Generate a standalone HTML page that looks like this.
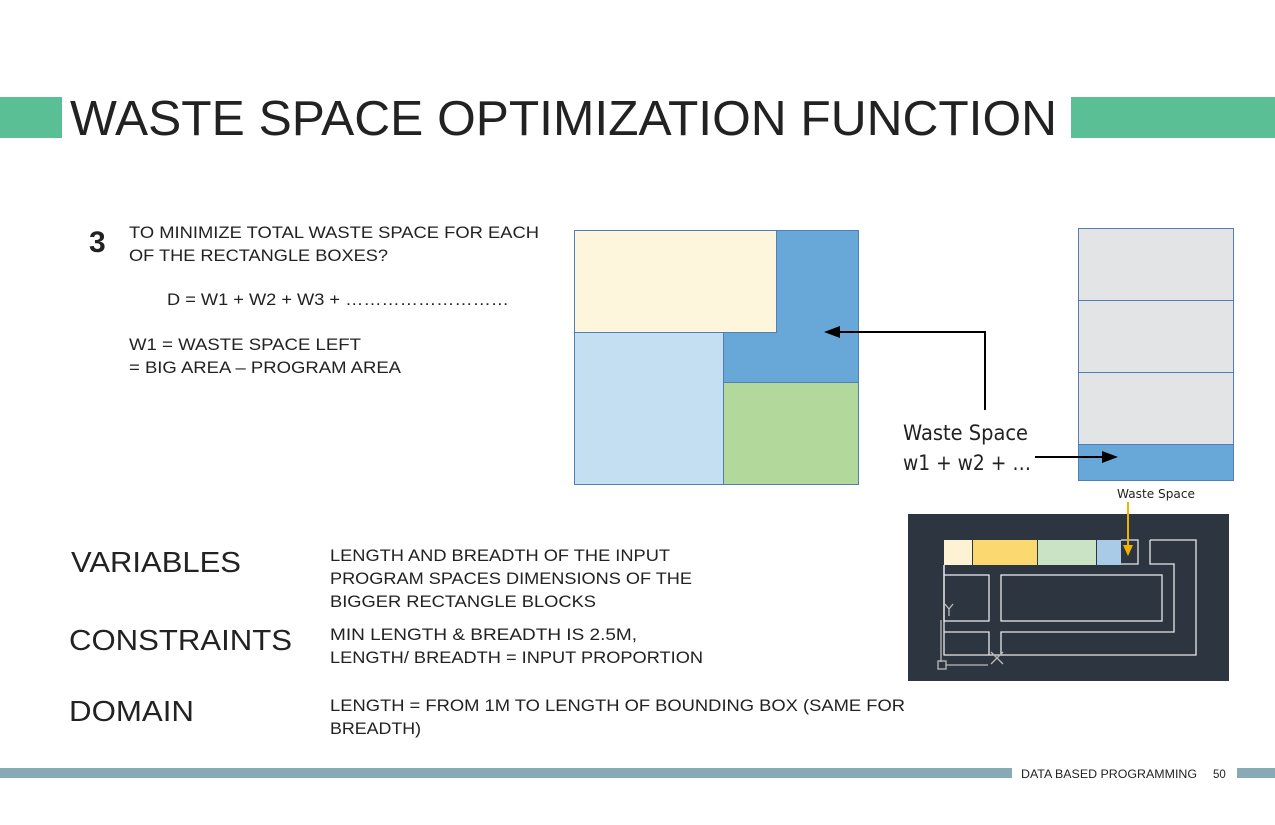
<!DOCTYPE html>
<html><head><meta charset="utf-8"><style>
html,body{margin:0;padding:0;background:#fff;}
svg{display:block;}
text{font-family:"Liberation Sans",sans-serif;fill:#222;}
.c{font-family:"DejaVu Sans","Liberation Sans",sans-serif;}
</style></head><body>
<svg width="1275" height="825" viewBox="0 0 1275 825" xmlns="http://www.w3.org/2000/svg">
<rect x="0" y="97" width="62" height="41" fill="#5abf94"/>
<rect x="1071" y="97" width="204" height="41" fill="#5abf94"/>
<text x="70" y="135" font-size="49" textLength="987" lengthAdjust="spacingAndGlyphs" style="font-weight:300">WASTE SPACE OPTIMIZATION FUNCTION</text>

<text x="89" y="252" font-size="30" font-weight="bold">3</text>
<g font-size="16.5">
<text x="129" y="238" textLength="410" lengthAdjust="spacingAndGlyphs">TO MINIMIZE TOTAL WASTE SPACE FOR EACH</text>
<text x="129" y="261" textLength="259" lengthAdjust="spacingAndGlyphs">OF THE RECTANGLE BOXES?</text>
<text x="167" y="305" textLength="342" lengthAdjust="spacingAndGlyphs">D = W1 + W2 + W3 + ………………………</text>
<text x="129" y="350" textLength="232" lengthAdjust="spacingAndGlyphs">W1 =  WASTE SPACE LEFT</text>
<text x="129" y="373" textLength="272" lengthAdjust="spacingAndGlyphs">= BIG AREA – PROGRAM AREA</text>

<text x="330" y="561" textLength="340" lengthAdjust="spacingAndGlyphs">LENGTH AND BREADTH OF THE INPUT</text>
<text x="330" y="584" textLength="362" lengthAdjust="spacingAndGlyphs">PROGRAM SPACES DIMENSIONS OF THE</text>
<text x="330" y="607" textLength="266" lengthAdjust="spacingAndGlyphs">BIGGER RECTANGLE BLOCKS</text>
<text x="330" y="640" textLength="307" lengthAdjust="spacingAndGlyphs">MIN LENGTH &amp; BREADTH IS 2.5M,</text>
<text x="330" y="663" textLength="373" lengthAdjust="spacingAndGlyphs">LENGTH/ BREADTH = INPUT PROPORTION</text>
<text x="330" y="711" textLength="575" lengthAdjust="spacingAndGlyphs">LENGTH = FROM 1M TO LENGTH OF BOUNDING BOX (SAME FOR</text>
<text x="330" y="734" textLength="91" lengthAdjust="spacingAndGlyphs">BREADTH)</text>
</g>
<g font-size="29">
<text x="71" y="572" textLength="170" lengthAdjust="spacingAndGlyphs">VARIABLES</text>
<text x="69" y="650" textLength="223" lengthAdjust="spacingAndGlyphs">CONSTRAINTS</text>
<text x="69" y="721" textLength="125" lengthAdjust="spacingAndGlyphs">DOMAIN</text>
</g>

<!-- left diagram -->
<g stroke="#4f7fb5" stroke-width="1">
<rect x="574.5" y="230.5" width="284" height="254" fill="#67a8d8"/>
<rect x="574.5" y="230.5" width="202" height="102" fill="#fdf6dc"/>
<rect x="574.5" y="332.5" width="149" height="152" fill="#c5dff2"/>
<rect x="723.5" y="382.5" width="135" height="102" fill="#b3d89c"/>
</g>
<!-- right stack -->
<g stroke="#4f7fb5" stroke-width="1">
<rect x="1078.5" y="228.5" width="155" height="72" fill="#e2e4e5"/>
<rect x="1078.5" y="300.5" width="155" height="72" fill="#e2e4e5"/>
<rect x="1078.5" y="372.5" width="155" height="72" fill="#e2e4e5"/>
<rect x="1078.5" y="444.5" width="155" height="36" fill="#67a8d8"/>
</g>
<!-- arrows -->
<g stroke="#000" stroke-width="2" fill="none">
<polyline points="985,410 985,332 838,332"/>
<line x1="1035" y1="457" x2="1104" y2="457"/>
</g>
<polygon points="824,332 840,326 840,338" fill="#000"/>
<polygon points="1118,457 1102,451 1102,463" fill="#000"/>
<text class="c" x="903" y="440" font-size="21" style="font-family:'DejaVu Sans',sans-serif" textLength="125" lengthAdjust="spacingAndGlyphs">Waste Space</text>
<text class="c" x="903" y="470" font-size="21" style="font-family:'DejaVu Sans',sans-serif" textLength="128" lengthAdjust="spacingAndGlyphs">w1 + w2 + …</text>
<text class="c" x="1117" y="498" font-size="12" style="font-family:'DejaVu Sans',sans-serif" textLength="78" lengthAdjust="spacingAndGlyphs">Waste Space</text>

<!-- CAD box -->
<rect x="908" y="514" width="321" height="167" fill="#2d3540"/>
<rect x="944" y="540" width="28" height="25" fill="#fdf3d4"/>
<rect x="973" y="540" width="64" height="25" fill="#fcd870"/>
<rect x="1038" y="540" width="58" height="25" fill="#c9e3c4"/>
<rect x="1097" y="540" width="24" height="25" fill="#a9cbe8"/>
<g stroke="#e8e8e8" stroke-width="1.3" fill="none">
<polyline points="1121,540 1138,540 1138,564 1121,564"/>
<polyline points="1150,540 1196,540 1196,655 944,655 944,565"/>
<polyline points="1150,540 1150,564 1174,564 1174,632 1001,632 1001,655"/>
<polyline points="944,632 989,632 989,655"/>
<rect x="944" y="575" width="45" height="46"/>
<rect x="1001" y="575" width="161" height="46"/>
<line x1="944" y1="565" x2="944" y2="575"/>
</g>
<g stroke="#bbb" stroke-width="1.3" fill="none">
<line x1="941" y1="620" x2="941" y2="662"/>
<rect x="938" y="661" width="8" height="8"/>
<line x1="946" y1="665" x2="988" y2="665"/>
<path d="M991,652 L1003,664 M1003,652 L991,664"/>
<path d="M945,604 L949,609 L953,604 M949,609 L949,616"/>
</g>
<line x1="1128" y1="502" x2="1128" y2="548" stroke="#f0b400" stroke-width="2"/>
<polygon points="1123,545 1133,545 1128,556" fill="#f0b400"/>

<!-- footer -->
<rect x="0" y="768" width="1012" height="10" fill="#87aab6"/>
<rect x="1237" y="768" width="38" height="10" fill="#87aab6"/>
<text x="1021" y="778" font-size="11.5" textLength="176" lengthAdjust="spacingAndGlyphs">DATA BASED PROGRAMMING</text>
<text x="1213" y="778" font-size="11.5">50</text>
</svg>
</body></html>
